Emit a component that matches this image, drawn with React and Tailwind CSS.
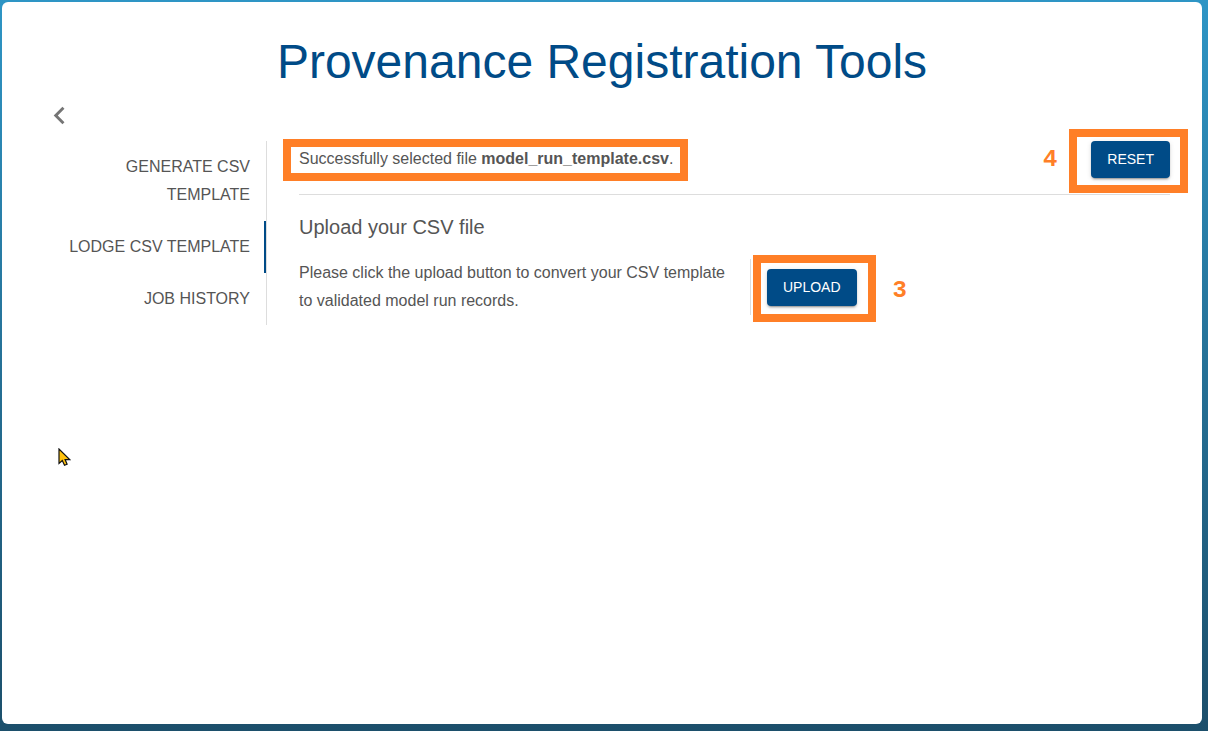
function Highlight({ className, children }) {
  return (
    <div className="relative">
      {children}
      <div className={`pointer-events-none absolute border-8 border-[#ff7f27] ${className}`} />
    </div>
  );
}

function Step({ className = '', children }) {
  return (
    <span
      className={`font-['Liberation_Mono',monospace] text-2xl leading-7 font-bold text-[#ff7f27] ${className}`}
    >
      {children}
    </span>
  );
}

function ActionButton({ children }) {
  return (
    <button
      type="button"
      className="block rounded bg-[#004b87] px-4 py-2 pb-[9px] text-sm leading-5 text-white uppercase shadow-[0_3px_1px_-2px_rgba(0,0,0,0.2),0_2px_2px_0_rgba(0,0,0,0.14),0_1px_5px_0_rgba(0,0,0,0.12)]"
    >
      {children}
    </button>
  );
}

const links = [
  { label: 'Generate CSV Template', active: false },
  { label: 'Lodge CSV Template', active: true },
  { label: 'Job History', active: false },
];

export default function App() {
  return (
    <div className="flex min-h-screen bg-linear-to-b from-[#2e95c5] to-[#1c4f6b] pt-[2px] pr-[6px] pb-[7px] pl-[2px] font-['Liberation_Sans',Arial,sans-serif] text-base leading-7 text-[#555555]">
      <main className="relative flex-1 rounded-md bg-white pt-8">
        <h1 className="text-center text-5xl leading-14 text-[#004b87]">
          Provenance Registration Tools
        </h1>

        <button type="button" aria-label="Back" className="mt-2 ml-10 block text-[#757575]">
          <svg viewBox="0 0 24 24" className="size-[35px]" fill="currentColor" aria-hidden="true">
            <path d="M15.41 7.41 14 6l-6 6 6 6 1.41-1.41L10.83 12z" />
          </svg>
        </button>

        <div className="mt-2 flex items-start gap-8 pr-8 pl-12">
          <nav className="w-[217px] shrink-0 border-r border-[#dddddd]">
            {links.map(({ label, active }) => (
              <a
                key={label}
                href="#"
                aria-current={active ? 'page' : undefined}
                className={`block border-r-2 py-3 pr-[14px] pl-4 text-right uppercase ${
                  active ? 'border-[#004b87]' : 'border-transparent'
                }`}
              >
                {label}
              </a>
            ))}
          </nav>

          <section className="min-w-0 flex-1">
            <div className="flex items-start justify-between border-b border-[#dddddd] pb-4">
              <Highlight className="-top-[2px] -right-[15px] -bottom-2 -left-4">
                <p className="pt-1">
                  Successfully selected file <strong>model_run_template.csv</strong>.
                </p>
              </Highlight>
              <div className="flex items-center gap-[34px]">
                <Step>4</Step>
                <Highlight className="-top-3 -right-[18px] -bottom-[15px] -left-[22px]">
                  <ActionButton>Reset</ActionButton>
                </Highlight>
              </div>
            </div>

            <h2 className="mt-[18px] text-xl leading-7">Upload your CSV file</h2>
            <div className="mt-[18px] flex items-center gap-4">
              <p className="w-[452px] border-r border-[#dddddd] pr-4">
                Please click the upload button to convert your CSV template to validated model run
                records.
              </p>
              <Highlight className="-top-[14px] -right-[19px] -bottom-4 -left-[14px]">
                <ActionButton>Upload</ActionButton>
              </Highlight>
              <Step className="mt-2 ml-5">3</Step>
            </div>
          </section>
        </div>

        <svg
          viewBox="0 0 13 19"
          className="absolute top-[446px] left-[56px] h-[19px] w-[13px]"
          aria-hidden="true"
        >
          <path
            d="M1 1v14.5l3.3-3 2.2 4.8 2.6-1.1-2-4.6h4.6z"
            fill="#ffc20e"
            stroke="#111111"
            strokeWidth="1.2"
          />
        </svg>
      </main>
    </div>
  );
}
